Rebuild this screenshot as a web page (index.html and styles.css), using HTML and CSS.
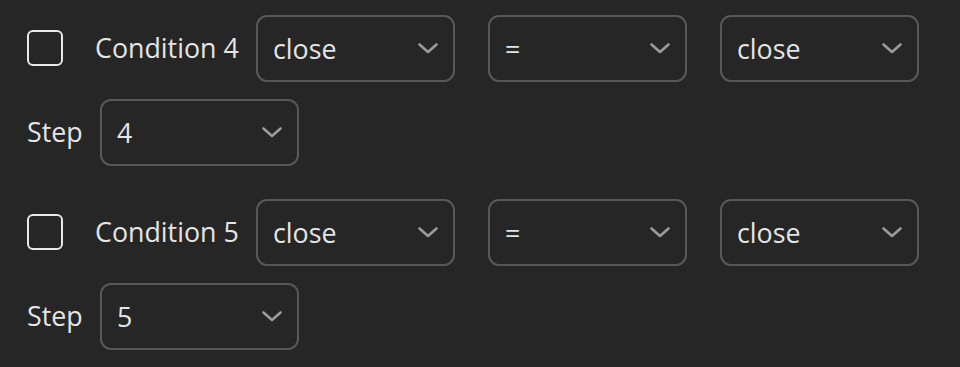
FILE: index.html
```html
<!DOCTYPE html>
<html>
<head>
<meta charset="utf-8">
<link rel="stylesheet" href="styles.css">
</head>
<body>
<div class="panel">
  <div class="row cond-row">
    <span class="checkbox"></span>
    <span class="label cond-label">Condition 4</span>
    <div class="selects">
      <div class="select"><span>close</span><svg class="chev" viewBox="0 0 20 11"><path d="M1.5 1.5 L10 9 L18.5 1.5"/></svg></div>
      <div class="select"><span>=</span><svg class="chev" viewBox="0 0 20 11"><path d="M1.5 1.5 L10 9 L18.5 1.5"/></svg></div>
      <div class="select"><span>close</span><svg class="chev" viewBox="0 0 20 11"><path d="M1.5 1.5 L10 9 L18.5 1.5"/></svg></div>
    </div>
  </div>
  <div class="row step-row">
    <span class="label step-label">Step</span>
    <div class="select"><span>4</span><svg class="chev" viewBox="0 0 20 11"><path d="M1.5 1.5 L10 9 L18.5 1.5"/></svg></div>
  </div>
  <div class="row cond-row next">
    <span class="checkbox"></span>
    <span class="label cond-label">Condition 5</span>
    <div class="selects">
      <div class="select"><span>close</span><svg class="chev" viewBox="0 0 20 11"><path d="M1.5 1.5 L10 9 L18.5 1.5"/></svg></div>
      <div class="select"><span>=</span><svg class="chev" viewBox="0 0 20 11"><path d="M1.5 1.5 L10 9 L18.5 1.5"/></svg></div>
      <div class="select"><span>close</span><svg class="chev" viewBox="0 0 20 11"><path d="M1.5 1.5 L10 9 L18.5 1.5"/></svg></div>
    </div>
  </div>
  <div class="row step-row">
    <span class="label step-label">Step</span>
    <div class="select"><span>5</span><svg class="chev" viewBox="0 0 20 11"><path d="M1.5 1.5 L10 9 L18.5 1.5"/></svg></div>
  </div>
</div>
</body>
</html>
```
FILE: styles.css
```css
html, body {
  margin: 0;
  padding: 0;
  background: #262626;
}
body {
  width: 960px;
  height: 367px;
  overflow: hidden;
  font-family: "Open Sans", "Noto Sans", sans-serif;
  color: #e4e4e4;
}
.panel {
  padding: 15px 0 0 27px;
  display: flex;
  flex-direction: column;
}
.row {
  display: flex;
  align-items: center;
  height: 66px;
}
.step-row {
  margin-top: 18px;
}
.cond-row.next {
  margin-top: 34px;
}
.checkbox {
  box-sizing: border-box;
  width: 36px;
  height: 36px;
  border: 2px solid #e8e8e8;
  border-radius: 6px;
  margin-right: 32px;
  flex: none;
}
.label {
  font-size: 26.8px;
  line-height: 1;
  white-space: nowrap;
}
.cond-label {
  width: 161px;
}
.step-label {
  width: 73px;
}
.selects {
  display: flex;
  gap: 33px;
}
.select {
  box-sizing: border-box;
  width: 199px;
  height: 67px;
  border: 2px solid #585858;
  border-radius: 11px;
  display: flex;
  align-items: center;
  justify-content: space-between;
  padding: 0 15px 0 15px;
  font-size: 26.8px;
  color: #e4e4e4;
}
.chev {
  width: 20px;
  height: 11px;
  fill: none;
  stroke: #9c9c9c;
  stroke-width: 2.6;
  stroke-linecap: round;
  stroke-linejoin: round;
}
```
